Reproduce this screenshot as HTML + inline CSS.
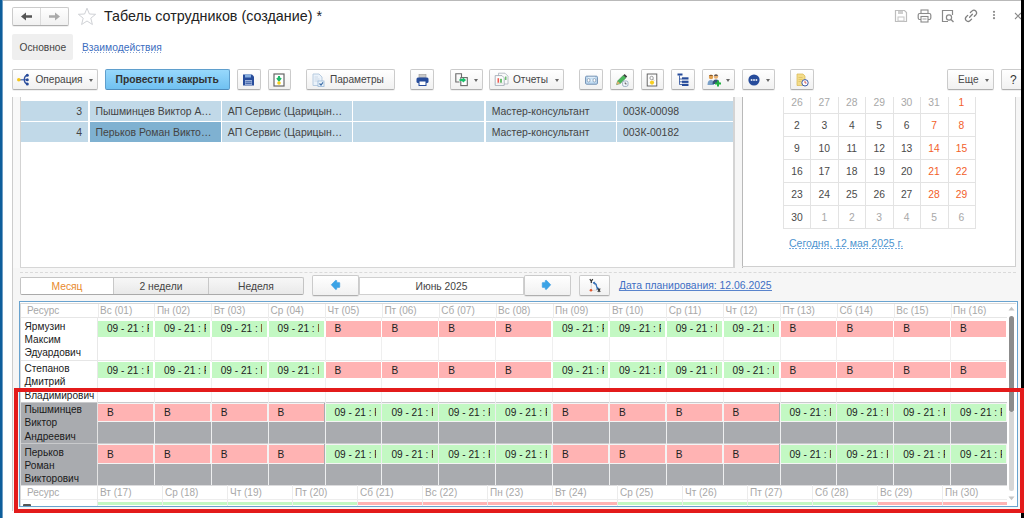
<!DOCTYPE html><html><head><meta charset="utf-8"><style>
*{margin:0;padding:0;box-sizing:border-box}
html,body{width:1024px;height:518px;overflow:hidden;background:#fff}
body{position:relative;font-family:"Liberation Sans",sans-serif;color:#333;font-size:10px}
.a{position:absolute}
.t{position:absolute;white-space:nowrap;line-height:1}
.btn{position:absolute;border:1px solid #cbcbcb;border-bottom-color:#afafaf;border-radius:2px;background:linear-gradient(#ffffff,#f1f1f1);box-shadow:0 1px 0 rgba(0,0,0,.06)}
.dd{position:absolute;width:0;height:0;border-left:2.5px solid transparent;border-right:2.5px solid transparent;border-top:3px solid #666}
</style></head><body>
<div class="a" style="left:0;top:0;width:1024px;height:1px;background:#b9b9b9"></div>
<div class="a" style="left:0;top:0;width:2px;height:518px;background:#0d5e9b"></div>
<div class="a" style="left:2px;top:0;width:1px;height:518px;background:#6f9ec4"></div>
<div class="btn" style="left:12px;top:7px;width:57px;height:19px"></div>
<div class="a" style="left:40px;top:8px;width:1px;height:17px;background:#dcdcdc"></div>
<svg class="a" style="left:20px;top:11px" width="13" height="11" viewBox="0 0 13 11"><path d="M1 5.5 L6 1.5 L6 4.3 L12 4.3 L12 6.7 L6 6.7 L6 9.5 Z" fill="#555"/></svg>
<svg class="a" style="left:48px;top:11px" width="13" height="11" viewBox="0 0 13 11"><path d="M12 5.5 L7 1.5 L7 4.3 L1 4.3 L1 6.7 L7 6.7 L7 9.5 Z" fill="#aaa"/></svg>
<svg class="a" style="left:77px;top:7px" width="20" height="19" viewBox="0 0 20 19"><path d="M10 1.2 L12.4 7 L18.6 7.3 L13.8 11.2 L15.4 17.5 L10 14 L4.6 17.5 L6.2 11.2 L1.4 7.3 L7.6 7 Z" fill="none" stroke="#c9ccd0" stroke-width="0.9"/></svg>
<div class="t" style="left:104px;top:9px;font-size:14.3px;color:#222">Табель сотрудников (создание) *</div>
<div class="a" style="left:12px;top:34px;width:61px;height:26px;background:#efefef;border-radius:2px"></div>
<div class="t" style="left:19.5px;top:43px;font-size:10.2px;color:#444">Основное</div>
<div class="t" style="left:82px;top:43px;font-size:10.3px;color:#3b6dc0">Взаимодействия</div>
<div class="a" style="left:82px;top:52px;width:80px;height:1px;background:repeating-linear-gradient(90deg,#8aa6d6 0 1.5px,transparent 1.5px 3px)"></div>
<svg class="a" style="left:894px;top:9px" width="14" height="14" viewBox="0 0 14 14"><path d="M1.5 1.5 H10.5 L12.5 3.5 V12.5 H1.5 Z" fill="none" stroke="#bdbdbd" stroke-width="1.2"/><rect x="4" y="2" width="5" height="3" fill="#cfcfcf"/><rect x="4" y="8" width="6" height="4" fill="none" stroke="#c4c4c4" stroke-width="1"/></svg>
<svg class="a" style="left:917px;top:9px" width="15" height="14" viewBox="0 0 15 14"><rect x="4" y="1" width="7" height="3.5" fill="none" stroke="#8a8a8a" stroke-width="1.1"/><rect x="1.2" y="4.5" width="12.6" height="6" rx="1.5" fill="none" stroke="#8a8a8a" stroke-width="1.2"/><rect x="4" y="7.5" width="7" height="5.5" fill="#fff" stroke="#8a8a8a" stroke-width="1.1"/><path d="M5.5 10 H9.5" stroke="#8a8a8a" stroke-width="0.8"/></svg>
<svg class="a" style="left:941px;top:9px" width="14" height="14" viewBox="0 0 14 14"><path d="M7 12.5 H1.5 V1.5 H11.5 V6" fill="none" stroke="#8a8a8a" stroke-width="1.2"/><circle cx="8" cy="8.5" r="2.6" fill="none" stroke="#8a8a8a" stroke-width="1.2"/><path d="M10 10.5 L12.5 13" stroke="#8a8a8a" stroke-width="1.4"/></svg>
<svg class="a" style="left:964px;top:9px" width="15" height="14" viewBox="0 0 15 14"><path d="M6.4 3.5 L8.1 1.9 A2.7 2.7 0 0 1 11.9 5.7 L10.3 7.3" fill="none" stroke="#808080" stroke-width="1.3" stroke-linecap="round"/><path d="M3.7 6.4 L2.1 8 A2.7 2.7 0 0 0 5.9 11.8 L7.6 10.1" fill="none" stroke="#808080" stroke-width="1.3" stroke-linecap="round"/><path d="M5.6 8.2 L8.4 5.3" stroke="#808080" stroke-width="1.3" stroke-linecap="round"/></svg>
<svg class="a" style="left:992px;top:10px" width="4" height="10" viewBox="0 0 4 10"><circle cx="2" cy="1.8" r="1.1" fill="#8a8a8a"/><circle cx="2" cy="5" r="1.1" fill="#8a8a8a"/><circle cx="2" cy="8.2" r="1.1" fill="#8a8a8a"/></svg>
<svg class="a" style="left:1014px;top:12px" width="8" height="8" viewBox="0 0 8 8"><path d="M1 1 L7 7 M7 1 L1 7" stroke="#8a8a8a" stroke-width="1.1"/></svg>
<div class="btn" style="left:12px;top:69px;width:86px;height:21px;"></div>
<svg class="a" style="left:16px;top:73px" width="14" height="14" viewBox="0 0 14 14"><path d="M3 6.8 H11.3" stroke="#3c5fae" stroke-width="1.2"/><path d="M11.3 2.2 C7.3 3.4 7.3 10 11.3 11" stroke="#2f4f9e" stroke-width="1.3" fill="none"/><circle cx="2.8" cy="6.7" r="1.8" fill="#f5c518"/><circle cx="11.3" cy="2.3" r="1.5" fill="#254a9a"/><circle cx="11.3" cy="6.8" r="1.5" fill="#254a9a"/><circle cx="11.3" cy="10.9" r="1.5" fill="#254a9a"/></svg>
<div class="t" style="left:35.5px;top:75px;font-size:10.1px;color:#444">Операция</div>
<div class="dd" style="left:88.5px;top:79px"></div>
<div class="a" style="left:105px;top:69px;width:125px;height:21px;border:1px solid #5f9fcd;border-bottom-color:#4f8dbd;border-radius:2px;background:linear-gradient(#97d8fc,#70c1f1)"></div>
<div class="t" style="left:115.5px;top:75px;font-size:10.3px;font-weight:bold;color:#333">Провести и закрыть</div>
<div class="btn" style="left:237px;top:69px;width:24px;height:21px;"></div>
<svg class="a" style="left:242px;top:74px" width="13" height="12" viewBox="0 0 13 12"><path d="M1 0.5 H10 L12 2.5 V11.5 H1 Z" fill="#274c9b"/><rect x="3" y="0.5" width="6" height="3" fill="#86aee0"/><rect x="3" y="6" width="7" height="5" fill="#9fb4dc"/><path d="M3.5 7.8 H9.5 M3.5 9.6 H9.5" stroke="#274c9b" stroke-width="0.8"/></svg>
<div class="btn" style="left:268px;top:69px;width:23px;height:21px;"></div>
<svg class="a" style="left:273px;top:73px" width="12" height="14" viewBox="0 0 12 14"><rect x="1" y="1" width="10" height="12" fill="#fff" stroke="#666" stroke-width="1.2"/><path d="M6 3 V6.5 M4 5 L6 7.5 L8 5" stroke="#1db96a" stroke-width="2" fill="none"/><circle cx="6" cy="10" r="1.8" fill="#f6cf1c"/></svg>
<div class="btn" style="left:306px;top:69px;width:89px;height:21px;"></div>
<svg class="a" style="left:312px;top:73px" width="13" height="14" viewBox="0 0 13 14"><path d="M1 1 H7 L10 4 V12.5 H1 Z" fill="#eaf2fa" stroke="#b8cce0" stroke-width="1"/><path d="M2.5 4 H6 M2.5 6 H7.5 M2.5 8 H7.5" stroke="#c5d3e2" stroke-width="0.8"/><rect x="6" y="8" width="6" height="5.5" fill="#eef5fb" stroke="#9ab8d8" stroke-width="0.8"/><path d="M7.5 10.5 L9 12 L11 9.3" stroke="#3e6ea8" stroke-width="1.2" fill="none"/></svg>
<div class="t" style="left:330px;top:75px;font-size:10.1px;color:#444">Параметры</div>
<div class="btn" style="left:410px;top:69px;width:24px;height:21px;"></div>
<svg class="a" style="left:416px;top:74px" width="13" height="12" viewBox="0 0 13 12"><rect x="3" y="0.5" width="7" height="3" fill="#c8c8c8" stroke="#999" stroke-width="0.6"/><rect x="0.5" y="3.5" width="12" height="5.5" rx="1.5" fill="#274c9b"/><rect x="3" y="7" width="7" height="4.5" fill="#fff" stroke="#274c9b" stroke-width="1"/></svg>
<div class="btn" style="left:450px;top:69px;width:33px;height:21px;"></div>
<svg class="a" style="left:454px;top:72px" width="15" height="15" viewBox="0 0 15 15"><path d="M5.5 10 H1.8 V1.8 H7.5 V5.5" fill="none" stroke="#6a6a6a" stroke-width="1.1"/><rect x="6.8" y="5.6" width="6.5" height="8" fill="#fff" stroke="#6a6a6a" stroke-width="1.1"/><path d="M5.5 8.1 H10 M8.6 6.4 L10.6 8.1 L8.6 9.8" stroke="#19c06a" stroke-width="2" fill="none"/></svg>
<div class="dd" style="left:474px;top:79px"></div>
<div class="btn" style="left:489px;top:69px;width:75px;height:21px;"></div>
<svg class="a" style="left:494px;top:72px" width="15" height="15" viewBox="0 0 15 15"><path d="M4.5 1.2 H11 L14 4.2 V12 H4.5 Z" fill="#fafafa" stroke="#a9b1ba" stroke-width="0.8"/><rect x="11.2" y="4.5" width="1.2" height="3.5" fill="#4cb050"/><path d="M1.2 3.6 H8 L10.2 5.8 V13.4 H1.2 Z" fill="#fdfdfd" stroke="#98a2ad" stroke-width="0.8"/><rect x="3.5" y="6.2" width="1.6" height="4.6" fill="#ef5a50"/><rect x="6.2" y="6.8" width="1.6" height="4" fill="#4cb050"/><path d="M2.5 11.2 H9" stroke="#c8c8c8" stroke-width="0.6"/></svg>
<div class="t" style="left:513px;top:75px;font-size:10.1px;color:#444">Отчеты</div>
<div class="dd" style="left:555px;top:79px"></div>
<div class="btn" style="left:579px;top:69px;width:24px;height:21px;"></div>
<svg class="a" style="left:585px;top:75px" width="13" height="10" viewBox="0 0 13 10"><rect x="0.6" y="1.2" width="11.8" height="8" rx="1" fill="#c2ddf3" stroke="#6f8db0" stroke-width="1"/><path d="M3 2.3 H10" stroke="#fff" stroke-width="0.6"/><rect x="2.3" y="3.6" width="2.6" height="3.4" rx="1.2" fill="#fff" stroke="#7a8fa8" stroke-width="0.7"/><rect x="8.1" y="3.6" width="2.6" height="3.4" rx="1.2" fill="#fff" stroke="#7a8fa8" stroke-width="0.7"/><rect x="5.8" y="4.2" width="1.4" height="2.2" fill="#e8f2fb"/></svg>
<div class="btn" style="left:610px;top:69px;width:24px;height:21px;"></div>
<svg class="a" style="left:615px;top:73px" width="14" height="14" viewBox="0 0 14 14"><path d="M1.6 11.6 L2.6 8 L8.4 2.2 L11 4.8 L5.2 10.6 Z" fill="#48b85a" stroke="#2d7a3a" stroke-width="0.5"/><path d="M8.4 2.2 L9.6 1 L12.2 3.6 L11 4.8 Z" fill="#3d3d3d"/><path d="M1.6 11.6 L2.6 8 L5.2 10.6 Z" fill="#e0b070"/><rect x="7.6" y="8" width="5.4" height="5.4" rx="1.6" fill="#f4f8fc" stroke="#8aa0b8" stroke-width="0.8"/><path d="M10.2 9.4 V10.9 H11.6" stroke="#333" stroke-width="0.8" fill="none"/></svg>
<div class="btn" style="left:641px;top:69px;width:23px;height:21px;"></div>
<svg class="a" style="left:646px;top:73px" width="12" height="14" viewBox="0 0 12 14"><rect x="1.2" y="1" width="9.6" height="12" fill="#fcfcfc" stroke="#5a5a5a" stroke-width="0.9"/><circle cx="5.6" cy="5" r="1.7" fill="none" stroke="#888" stroke-width="0.8"/><path d="M6.8 6.2 L8 7.4" stroke="#888" stroke-width="0.8"/><circle cx="6" cy="9.6" r="2.1" fill="#f8cf20"/></svg>
<div class="btn" style="left:671px;top:69px;width:24px;height:21px;"></div>
<svg class="a" style="left:677px;top:73px" width="12" height="14" viewBox="0 0 12 14"><rect x="0.5" y="0.5" width="5" height="2" fill="#274c9b"/><path d="M2.5 2.5 V11.5 M2.5 6 H5 M2.5 8.8 H5 M2.5 11.5 H5" stroke="#274c9b" stroke-width="0.8"/><rect x="5" y="4.3" width="6.5" height="2.2" fill="#274c9b"/><rect x="5" y="7.7" width="6.5" height="2.2" fill="#274c9b"/><rect x="5" y="10.8" width="6.5" height="2.2" fill="#274c9b"/></svg>
<div class="btn" style="left:702px;top:69px;width:33px;height:21px;"></div>
<svg class="a" style="left:707px;top:73px" width="15" height="14" viewBox="0 0 15 14"><circle cx="4" cy="4" r="2.2" fill="#e0a050"/><path d="M1.8 3 Q4 0.5 6.2 3" fill="#8a5a2a"/><path d="M0.5 12 Q0.5 7 4 7 Q7 7 7 12 Z" fill="#7aa0c8"/><circle cx="9" cy="3.5" r="2.2" fill="#e8b070"/><path d="M6.8 2.8 Q9 0 11.2 2.8" fill="#34405a"/><path d="M5.5 11 Q5.5 6.5 9 6.5 Q12.5 6.5 12.5 11 Z" fill="#34507a"/><path d="M11 7.5 V13.5 M8 10.5 H14" stroke="#20b040" stroke-width="2"/></svg>
<div class="dd" style="left:726px;top:79px"></div>
<div class="btn" style="left:742px;top:69px;width:33px;height:21px;"></div>
<svg class="a" style="left:748px;top:74px" width="12" height="12" viewBox="0 0 12 12"><circle cx="6" cy="6" r="5.6" fill="#274c9b"/><rect x="2.8" y="5.2" width="1.6" height="1.6" fill="#fff"/><rect x="5.2" y="5.2" width="1.6" height="1.6" fill="#fff"/><rect x="7.6" y="5.2" width="1.6" height="1.6" fill="#fff"/></svg>
<div class="dd" style="left:766px;top:79px"></div>
<div class="btn" style="left:790px;top:69px;width:24px;height:21px;"></div>
<svg class="a" style="left:796px;top:73px" width="13" height="14" viewBox="0 0 13 14"><path d="M1 1 H7 L9 3 V12.5 H1 Z" fill="#f3dc8a" stroke="#d8b850" stroke-width="0.7"/><path d="M2.5 4.5 H6.5 M2.5 6.5 H6.5 M2.5 8.5 H5" stroke="#d8b850" stroke-width="0.6"/><circle cx="9" cy="9.8" r="3.2" fill="#fff" stroke="#3a5aa8" stroke-width="1"/><path d="M9 8 V10 H10.5" stroke="#c33" stroke-width="0.8" fill="none"/></svg>
<div class="btn" style="left:947px;top:69px;width:47px;height:21px;"></div>
<div class="t" style="left:958px;top:75px;font-size:10.1px;color:#4a4a4a">Еще</div>
<div class="dd" style="left:984.5px;top:79px"></div>
<div class="btn" style="left:1001px;top:69px;width:24px;height:21px;"></div>
<div class="t" style="left:1010px;top:74px;font-size:12px;color:#333">?</div>
<div class="a" style="left:13px;top:97px;width:1008px;height:413px;background:#f6f6f6"></div>
<div class="a" style="left:21px;top:97px;width:712px;height:170px;background:#fff"></div>
<div class="a" style="left:743px;top:97px;width:272px;height:169px;background:#fff"></div>
<div class="a" style="left:12px;top:97px;width:1px;height:414px;background:#cdcdcd"></div>
<div class="a" style="left:13px;top:97px;width:8px;height:171px;background:#f9f9f9"></div>
<div class="a" style="left:20px;top:97px;width:1px;height:171px;background:#d3d3d3"></div>
<div class="a" style="left:20px;top:267px;width:715px;height:1px;background:#d6d6d6"></div>
<div class="a" style="left:733px;top:97px;width:2px;height:171px;background:#d4d4d4"></div>
<div class="a" style="left:735px;top:97px;width:7px;height:171px;background:#f6f6f6"></div>
<div class="a" style="left:742px;top:97px;width:1px;height:171px;background:#b9b9b9"></div>
<div class="a" style="left:21px;top:101px;width:67px;height:19.5px;background:#c1d9e8"></div>
<div class="t" style="left:21px;width:61px;text-align:right;top:106.6px;font-size:10.45px;color:#444">3</div>
<div class="a" style="left:89.5px;top:101px;width:131.0px;height:19.5px;background:#c1d9e8"></div>
<div class="t" style="left:95.5px;top:106.6px;font-size:10.45px;color:#444">Пышминцев Виктор А…</div>
<div class="a" style="left:221.8px;top:101px;width:130.2px;height:19.5px;background:#c1d9e8"></div>
<div class="t" style="left:227.8px;top:106.6px;font-size:10.45px;color:#444">АП Сервис (Царицын…</div>
<div class="a" style="left:353.2px;top:101px;width:131.3px;height:19.5px;background:#c1d9e8"></div>
<div class="a" style="left:485.7px;top:101px;width:130.09999999999997px;height:19.5px;background:#c1d9e8"></div>
<div class="t" style="left:491.7px;top:106.6px;font-size:10.45px;color:#444">Мастер-консультант</div>
<div class="a" style="left:617px;top:101px;width:116px;height:19.5px;background:#c1d9e8"></div>
<div class="t" style="left:623px;top:106.6px;font-size:10.45px;color:#444">003К-00098</div>
<div class="a" style="left:21px;top:122px;width:67px;height:19.5px;background:#c1d9e8"></div>
<div class="t" style="left:21px;width:61px;text-align:right;top:127.6px;font-size:10.45px;color:#444">4</div>
<div class="a" style="left:89.5px;top:122px;width:131.0px;height:19.5px;background:#7fb1d1"></div>
<div class="t" style="left:95.5px;top:127.6px;font-size:10.45px;color:#444">Перьков Роман Викто…</div>
<div class="a" style="left:221.8px;top:122px;width:130.2px;height:19.5px;background:#c1d9e8"></div>
<div class="t" style="left:227.8px;top:127.6px;font-size:10.45px;color:#444">АП Сервис (Царицын…</div>
<div class="a" style="left:353.2px;top:122px;width:131.3px;height:19.5px;background:#c1d9e8"></div>
<div class="a" style="left:485.7px;top:122px;width:130.09999999999997px;height:19.5px;background:#c1d9e8"></div>
<div class="t" style="left:491.7px;top:127.6px;font-size:10.45px;color:#444">Мастер-консультант</div>
<div class="a" style="left:617px;top:122px;width:116px;height:19.5px;background:#c1d9e8"></div>
<div class="t" style="left:623px;top:127.6px;font-size:10.45px;color:#444">003К-00182</div>
<div class="a" style="left:742px;top:266px;width:274px;height:1px;background:#cfcfcf"></div>
<div class="a" style="left:1015px;top:97px;width:1px;height:170px;background:#cfcfcf"></div>
<div class="a" style="left:743px;top:97px;width:272px;height:140px;overflow:hidden">
<div class="a" style="left:40px;top:0;width:1px;height:132px;background:#e3e3e3"></div>
<div class="a" style="left:67px;top:0;width:1px;height:132px;background:#e3e3e3"></div>
<div class="a" style="left:95px;top:0;width:1px;height:132px;background:#e3e3e3"></div>
<div class="a" style="left:122px;top:0;width:1px;height:132px;background:#e3e3e3"></div>
<div class="a" style="left:150px;top:0;width:1px;height:132px;background:#e3e3e3"></div>
<div class="a" style="left:177px;top:0;width:1px;height:132px;background:#e3e3e3"></div>
<div class="a" style="left:205px;top:0;width:1px;height:132px;background:#e3e3e3"></div>
<div class="a" style="left:232px;top:0;width:1px;height:132px;background:#e3e3e3"></div>
<div class="a" style="left:40px;top:16px;width:193px;height:1px;background:#e3e3e3"></div>
<div class="a" style="left:40px;top:39px;width:193px;height:1px;background:#e3e3e3"></div>
<div class="a" style="left:40px;top:62px;width:193px;height:1px;background:#e3e3e3"></div>
<div class="a" style="left:40px;top:85px;width:193px;height:1px;background:#e3e3e3"></div>
<div class="a" style="left:40px;top:108px;width:193px;height:1px;background:#e3e3e3"></div>
<div class="a" style="left:40px;top:131px;width:193px;height:1px;background:#e3e3e3"></div>
<div class="t" style="left:40.20px;top:0.90px;width:27.43px;text-align:center;font-size:10.3px;color:#a8a8a8">26</div>
<div class="t" style="left:67.63px;top:0.90px;width:27.43px;text-align:center;font-size:10.3px;color:#a8a8a8">27</div>
<div class="t" style="left:95.06px;top:0.90px;width:27.43px;text-align:center;font-size:10.3px;color:#a8a8a8">28</div>
<div class="t" style="left:122.49px;top:0.90px;width:27.43px;text-align:center;font-size:10.3px;color:#a8a8a8">29</div>
<div class="t" style="left:149.92px;top:0.90px;width:27.43px;text-align:center;font-size:10.3px;color:#a8a8a8">30</div>
<div class="t" style="left:177.35px;top:0.90px;width:27.43px;text-align:center;font-size:10.3px;color:#a8a8a8">31</div>
<div class="t" style="left:204.78px;top:0.90px;width:27.43px;text-align:center;font-size:10.3px;color:#f2602a">1</div>
<div class="t" style="left:40.20px;top:23.98px;width:27.43px;text-align:center;font-size:10.3px;color:#4a4a4a">2</div>
<div class="t" style="left:67.63px;top:23.98px;width:27.43px;text-align:center;font-size:10.3px;color:#4a4a4a">3</div>
<div class="t" style="left:95.06px;top:23.98px;width:27.43px;text-align:center;font-size:10.3px;color:#4a4a4a">4</div>
<div class="t" style="left:122.49px;top:23.98px;width:27.43px;text-align:center;font-size:10.3px;color:#4a4a4a">5</div>
<div class="t" style="left:149.92px;top:23.98px;width:27.43px;text-align:center;font-size:10.3px;color:#4a4a4a">6</div>
<div class="t" style="left:177.35px;top:23.98px;width:27.43px;text-align:center;font-size:10.3px;color:#f2602a">7</div>
<div class="t" style="left:204.78px;top:23.98px;width:27.43px;text-align:center;font-size:10.3px;color:#f2602a">8</div>
<div class="t" style="left:40.20px;top:47.06px;width:27.43px;text-align:center;font-size:10.3px;color:#4a4a4a">9</div>
<div class="t" style="left:67.63px;top:47.06px;width:27.43px;text-align:center;font-size:10.3px;color:#4a4a4a">10</div>
<div class="t" style="left:95.06px;top:47.06px;width:27.43px;text-align:center;font-size:10.3px;color:#4a4a4a">11</div>
<div class="t" style="left:122.49px;top:47.06px;width:27.43px;text-align:center;font-size:10.3px;color:#4a4a4a">12</div>
<div class="t" style="left:149.92px;top:47.06px;width:27.43px;text-align:center;font-size:10.3px;color:#4a4a4a">13</div>
<div class="t" style="left:177.35px;top:47.06px;width:27.43px;text-align:center;font-size:10.3px;color:#f2602a">14</div>
<div class="t" style="left:204.78px;top:47.06px;width:27.43px;text-align:center;font-size:10.3px;color:#f2602a">15</div>
<div class="t" style="left:40.20px;top:70.14px;width:27.43px;text-align:center;font-size:10.3px;color:#4a4a4a">16</div>
<div class="t" style="left:67.63px;top:70.14px;width:27.43px;text-align:center;font-size:10.3px;color:#4a4a4a">17</div>
<div class="t" style="left:95.06px;top:70.14px;width:27.43px;text-align:center;font-size:10.3px;color:#4a4a4a">18</div>
<div class="t" style="left:122.49px;top:70.14px;width:27.43px;text-align:center;font-size:10.3px;color:#4a4a4a">19</div>
<div class="t" style="left:149.92px;top:70.14px;width:27.43px;text-align:center;font-size:10.3px;color:#4a4a4a">20</div>
<div class="t" style="left:177.35px;top:70.14px;width:27.43px;text-align:center;font-size:10.3px;color:#f2602a">21</div>
<div class="t" style="left:204.78px;top:70.14px;width:27.43px;text-align:center;font-size:10.3px;color:#f2602a">22</div>
<div class="t" style="left:40.20px;top:93.22px;width:27.43px;text-align:center;font-size:10.3px;color:#4a4a4a">23</div>
<div class="t" style="left:67.63px;top:93.22px;width:27.43px;text-align:center;font-size:10.3px;color:#4a4a4a">24</div>
<div class="t" style="left:95.06px;top:93.22px;width:27.43px;text-align:center;font-size:10.3px;color:#4a4a4a">25</div>
<div class="t" style="left:122.49px;top:93.22px;width:27.43px;text-align:center;font-size:10.3px;color:#4a4a4a">26</div>
<div class="t" style="left:149.92px;top:93.22px;width:27.43px;text-align:center;font-size:10.3px;color:#4a4a4a">27</div>
<div class="t" style="left:177.35px;top:93.22px;width:27.43px;text-align:center;font-size:10.3px;color:#f2602a">28</div>
<div class="t" style="left:204.78px;top:93.22px;width:27.43px;text-align:center;font-size:10.3px;color:#f2602a">29</div>
<div class="t" style="left:40.20px;top:116.30px;width:27.43px;text-align:center;font-size:10.3px;color:#4a4a4a">30</div>
<div class="t" style="left:67.63px;top:116.30px;width:27.43px;text-align:center;font-size:10.3px;color:#a8a8a8">1</div>
<div class="t" style="left:95.06px;top:116.30px;width:27.43px;text-align:center;font-size:10.3px;color:#a8a8a8">2</div>
<div class="t" style="left:122.49px;top:116.30px;width:27.43px;text-align:center;font-size:10.3px;color:#a8a8a8">3</div>
<div class="t" style="left:149.92px;top:116.30px;width:27.43px;text-align:center;font-size:10.3px;color:#a8a8a8">4</div>
<div class="t" style="left:177.35px;top:116.30px;width:27.43px;text-align:center;font-size:10.3px;color:#a8a8a8">5</div>
<div class="t" style="left:204.78px;top:116.30px;width:27.43px;text-align:center;font-size:10.3px;color:#a8a8a8">6</div>
</div>
<div class="t" style="left:789px;top:238.3px;font-size:10.5px;color:#4d94cf">Сегодня, 12 мая 2025 г.</div>
<div class="a" style="left:789px;top:247.5px;width:114px;height:1px;background:repeating-linear-gradient(90deg,#78ade0 0 2px,transparent 2px 3.2px)"></div>
<div class="a" style="left:20px;top:272px;width:996px;height:1px;border-top:1px dashed #dadada"></div>
<div class="a" style="left:20px;top:277px;width:284px;height:18px;border:1px solid #c4c4c4;border-bottom-color:#aaa;border-radius:2px;background:linear-gradient(#f7f7f7,#e9e9e9);overflow:hidden"><div class="a" style="left:0;top:0;width:93px;height:16px;background:#fff;border-right:1px solid #c8c8c8"></div><div class="a" style="left:186.5px;top:0;width:1px;height:16px;background:#c8c8c8"></div></div>
<div class="t" style="left:20px;width:94px;text-align:center;top:281.5px;font-size:10.3px;color:#e8892c">Месяц</div>
<div class="t" style="left:114px;width:94px;text-align:center;top:281.5px;font-size:10.3px;color:#444">2 недели</div>
<div class="t" style="left:208px;width:96px;text-align:center;top:281.5px;font-size:10.3px;color:#444">Неделя</div>
<div class="btn" style="left:312px;top:275px;width:47px;height:21px;"></div>
<svg class="a" style="left:330px;top:279px" width="11" height="12" viewBox="0 0 11 12"><path d="M1.2 5.8 L5.6 1.3 L6.8 1.6 L6.8 3.4 L9.2 3.4 Q9.8 3.4 9.8 4 L9.8 7.9 Q9.8 8.5 9.2 8.5 L6.8 8.5 L6.8 10.2 L5.6 10.6 Z" fill="#3ba3e6" stroke="#3a9ae0" stroke-width="0.5" stroke-linejoin="round"/></svg>
<div class="a" style="left:359px;top:277px;width:165px;height:18px;border:1px solid #d0d0d0;background:#fff"></div>
<div class="t" style="left:359px;width:165px;text-align:center;top:281.5px;font-size:10.3px;color:#444">Июнь 2025</div>
<div class="btn" style="left:524px;top:275px;width:47px;height:21px;"></div>
<svg class="a" style="left:541px;top:279px" width="11" height="12" viewBox="0 0 11 12"><path d="M9.8 5.8 L5.4 1.3 L4.2 1.6 L4.2 3.4 L1.8 3.4 Q1.2 3.4 1.2 4 L1.2 7.9 Q1.2 8.5 1.8 8.5 L4.2 8.5 L4.2 10.2 L5.4 10.6 Z" fill="#3ba3e6" stroke="#3a9ae0" stroke-width="0.5" stroke-linejoin="round"/></svg>
<div class="btn" style="left:579px;top:275px;width:31px;height:21px;"></div>
<svg class="a" style="left:588px;top:278px" width="14" height="15" viewBox="0 0 14 15"><path d="M3.3 4.5 V11" stroke="#aaa" stroke-width="0.8" stroke-dasharray="1 1"/><path d="M4.5 12.3 H9" stroke="#bbb" stroke-width="0.8" stroke-dasharray="1 1"/><path d="M1.8 1.2 L3.3 3.2 L4.8 1.2 M3.3 3.2 V5" stroke="#333" stroke-width="1.2" fill="none"/><circle cx="3" cy="12.3" r="1.3" fill="#e2542a"/><path d="M5.5 5 Q8.5 5.5 8.5 8 Q8.5 10 10.5 10.5" stroke="#3b74b8" stroke-width="1.3" fill="none"/><path d="M4.6 4.6 L7.2 3.4 L6.6 6.8 Z" fill="#3b74b8"/><path d="M11.2 11 L8.3 12 L9 8.8 Z" fill="#3b74b8"/><path d="M9.8 10.5 L12.2 13.8 M12.2 10.5 L9.8 13.8" stroke="#333" stroke-width="1.2"/></svg>
<div class="t" style="left:619px;top:280.8px;font-size:10.4px;color:#3d6ec4">Дата планирования: 12.06.2025</div>
<div class="a" style="left:619px;top:290px;width:152.5px;height:1px;background:#5a84cc"></div>
<div class="a" style="left:19px;top:301px;width:999px;height:206px;border:1px solid #69a3cf;background:#fff"></div>
<div class="a" style="left:20px;top:303px;width:996px;height:1px;background:#d9d9d9"></div>
<div class="a" style="left:20px;top:303px;width:1px;height:203px;background:#d9d9d9"></div>
<div class="t" style="left:27px;top:306px;font-size:10px;color:#a8a8a8">Ресурс</div>
<div class="a" style="left:97.5px;top:304px;width:1px;height:13px;background:#ececec"></div>
<div class="t" style="left:100.00px;top:306px;font-size:10px;color:#a8a8a8">Вс (01)</div>
<div class="a" style="left:154.375px;top:304px;width:1px;height:13px;background:#ececec"></div>
<div class="t" style="left:156.88px;top:306px;font-size:10px;color:#a8a8a8">Пн (02)</div>
<div class="a" style="left:211.25px;top:304px;width:1px;height:13px;background:#ececec"></div>
<div class="t" style="left:213.75px;top:306px;font-size:10px;color:#a8a8a8">Вт (03)</div>
<div class="a" style="left:268.125px;top:304px;width:1px;height:13px;background:#ececec"></div>
<div class="t" style="left:270.62px;top:306px;font-size:10px;color:#a8a8a8">Ср (04)</div>
<div class="a" style="left:325.0px;top:304px;width:1px;height:13px;background:#ececec"></div>
<div class="t" style="left:327.50px;top:306px;font-size:10px;color:#a8a8a8">Чт (05)</div>
<div class="a" style="left:381.875px;top:304px;width:1px;height:13px;background:#ececec"></div>
<div class="t" style="left:384.38px;top:306px;font-size:10px;color:#a8a8a8">Пт (06)</div>
<div class="a" style="left:438.75px;top:304px;width:1px;height:13px;background:#ececec"></div>
<div class="t" style="left:441.25px;top:306px;font-size:10px;color:#a8a8a8">Сб (07)</div>
<div class="a" style="left:495.625px;top:304px;width:1px;height:13px;background:#ececec"></div>
<div class="t" style="left:498.12px;top:306px;font-size:10px;color:#a8a8a8">Вс (08)</div>
<div class="a" style="left:552.5px;top:304px;width:1px;height:13px;background:#ececec"></div>
<div class="t" style="left:555.00px;top:306px;font-size:10px;color:#a8a8a8">Пн (09)</div>
<div class="a" style="left:609.375px;top:304px;width:1px;height:13px;background:#ececec"></div>
<div class="t" style="left:611.88px;top:306px;font-size:10px;color:#a8a8a8">Вт (10)</div>
<div class="a" style="left:666.25px;top:304px;width:1px;height:13px;background:#ececec"></div>
<div class="t" style="left:668.75px;top:306px;font-size:10px;color:#a8a8a8">Ср (11)</div>
<div class="a" style="left:723.125px;top:304px;width:1px;height:13px;background:#ececec"></div>
<div class="t" style="left:725.62px;top:306px;font-size:10px;color:#a8a8a8">Чт (12)</div>
<div class="a" style="left:780.0px;top:304px;width:1px;height:13px;background:#ececec"></div>
<div class="t" style="left:782.50px;top:306px;font-size:10px;color:#a8a8a8">Пт (13)</div>
<div class="a" style="left:836.875px;top:304px;width:1px;height:13px;background:#ececec"></div>
<div class="t" style="left:839.38px;top:306px;font-size:10px;color:#a8a8a8">Сб (14)</div>
<div class="a" style="left:893.75px;top:304px;width:1px;height:13px;background:#ececec"></div>
<div class="t" style="left:896.25px;top:306px;font-size:10px;color:#a8a8a8">Вс (15)</div>
<div class="a" style="left:950.625px;top:304px;width:1px;height:13px;background:#ececec"></div>
<div class="t" style="left:953.12px;top:306px;font-size:10px;color:#a8a8a8">Пн (16)</div>
<div class="a" style="left:21px;top:317px;width:986px;height:1px;background:#e6e6e6"></div>
<div class="a" style="left:21px;top:317px;width:986px;height:1px;background:#e6e6e6"></div>
<div class="a" style="left:97px;top:317px;width:1px;height:43px;background:#e8e8e8"></div>
<div class="a" style="left:98.00px;top:321px;width:55.38px;height:16px;background:#c3f8c3"><div class="a" style="left:0;top:0;width:50.67px;height:16px;overflow:hidden"><div class="t" style="left:9px;top:3.3px;font-size:10.1px;color:#222">09 - 21 : Р</div></div></div>
<div class="a" style="left:153.875px;top:317px;width:1px;height:4px;background:#efefef"></div>
<div class="a" style="left:153.875px;top:337px;width:1px;height:23px;background:#efefef"></div>
<div class="a" style="left:154.88px;top:321px;width:55.38px;height:16px;background:#c3f8c3"><div class="a" style="left:0;top:0;width:50.67px;height:16px;overflow:hidden"><div class="t" style="left:9px;top:3.3px;font-size:10.1px;color:#222">09 - 21 : Р</div></div></div>
<div class="a" style="left:210.75px;top:317px;width:1px;height:4px;background:#efefef"></div>
<div class="a" style="left:210.75px;top:337px;width:1px;height:23px;background:#efefef"></div>
<div class="a" style="left:211.75px;top:321px;width:55.38px;height:16px;background:#c3f8c3"><div class="a" style="left:0;top:0;width:50.67px;height:16px;overflow:hidden"><div class="t" style="left:9px;top:3.3px;font-size:10.1px;color:#222">09 - 21 : Р</div></div></div>
<div class="a" style="left:267.625px;top:317px;width:1px;height:4px;background:#efefef"></div>
<div class="a" style="left:267.625px;top:337px;width:1px;height:23px;background:#efefef"></div>
<div class="a" style="left:268.62px;top:321px;width:55.38px;height:16px;background:#c3f8c3"><div class="a" style="left:0;top:0;width:50.67px;height:16px;overflow:hidden"><div class="t" style="left:9px;top:3.3px;font-size:10.1px;color:#222">09 - 21 : Р</div></div></div>
<div class="a" style="left:324.5px;top:317px;width:1px;height:4px;background:#efefef"></div>
<div class="a" style="left:324.5px;top:337px;width:1px;height:23px;background:#efefef"></div>
<div class="a" style="left:325.50px;top:321px;width:55.38px;height:16px;background:#ffb3b3"><div class="a" style="left:0;top:0;width:50.67px;height:16px;overflow:hidden"><div class="t" style="left:9px;top:3.3px;font-size:10.1px;color:#222">В</div></div></div>
<div class="a" style="left:381.375px;top:317px;width:1px;height:4px;background:#efefef"></div>
<div class="a" style="left:381.375px;top:337px;width:1px;height:23px;background:#efefef"></div>
<div class="a" style="left:382.38px;top:321px;width:55.38px;height:16px;background:#ffb3b3"><div class="a" style="left:0;top:0;width:50.67px;height:16px;overflow:hidden"><div class="t" style="left:9px;top:3.3px;font-size:10.1px;color:#222">В</div></div></div>
<div class="a" style="left:438.25px;top:317px;width:1px;height:4px;background:#efefef"></div>
<div class="a" style="left:438.25px;top:337px;width:1px;height:23px;background:#efefef"></div>
<div class="a" style="left:439.25px;top:321px;width:55.38px;height:16px;background:#ffb3b3"><div class="a" style="left:0;top:0;width:50.67px;height:16px;overflow:hidden"><div class="t" style="left:9px;top:3.3px;font-size:10.1px;color:#222">В</div></div></div>
<div class="a" style="left:495.125px;top:317px;width:1px;height:4px;background:#efefef"></div>
<div class="a" style="left:495.125px;top:337px;width:1px;height:23px;background:#efefef"></div>
<div class="a" style="left:496.12px;top:321px;width:55.38px;height:16px;background:#ffb3b3"><div class="a" style="left:0;top:0;width:50.67px;height:16px;overflow:hidden"><div class="t" style="left:9px;top:3.3px;font-size:10.1px;color:#222">В</div></div></div>
<div class="a" style="left:552.0px;top:317px;width:1px;height:4px;background:#efefef"></div>
<div class="a" style="left:552.0px;top:337px;width:1px;height:23px;background:#efefef"></div>
<div class="a" style="left:553.00px;top:321px;width:55.38px;height:16px;background:#c3f8c3"><div class="a" style="left:0;top:0;width:50.67px;height:16px;overflow:hidden"><div class="t" style="left:9px;top:3.3px;font-size:10.1px;color:#222">09 - 21 : Р</div></div></div>
<div class="a" style="left:608.875px;top:317px;width:1px;height:4px;background:#efefef"></div>
<div class="a" style="left:608.875px;top:337px;width:1px;height:23px;background:#efefef"></div>
<div class="a" style="left:609.88px;top:321px;width:55.38px;height:16px;background:#c3f8c3"><div class="a" style="left:0;top:0;width:50.67px;height:16px;overflow:hidden"><div class="t" style="left:9px;top:3.3px;font-size:10.1px;color:#222">09 - 21 : Р</div></div></div>
<div class="a" style="left:665.75px;top:317px;width:1px;height:4px;background:#efefef"></div>
<div class="a" style="left:665.75px;top:337px;width:1px;height:23px;background:#efefef"></div>
<div class="a" style="left:666.75px;top:321px;width:55.38px;height:16px;background:#c3f8c3"><div class="a" style="left:0;top:0;width:50.67px;height:16px;overflow:hidden"><div class="t" style="left:9px;top:3.3px;font-size:10.1px;color:#222">09 - 21 : Р</div></div></div>
<div class="a" style="left:722.625px;top:317px;width:1px;height:4px;background:#efefef"></div>
<div class="a" style="left:722.625px;top:337px;width:1px;height:23px;background:#efefef"></div>
<div class="a" style="left:723.62px;top:321px;width:55.38px;height:16px;background:#c3f8c3"><div class="a" style="left:0;top:0;width:50.67px;height:16px;overflow:hidden"><div class="t" style="left:9px;top:3.3px;font-size:10.1px;color:#222">09 - 21 : Р</div></div></div>
<div class="a" style="left:779.5px;top:317px;width:1px;height:4px;background:#efefef"></div>
<div class="a" style="left:779.5px;top:337px;width:1px;height:23px;background:#efefef"></div>
<div class="a" style="left:780.50px;top:321px;width:55.38px;height:16px;background:#ffb3b3"><div class="a" style="left:0;top:0;width:50.67px;height:16px;overflow:hidden"><div class="t" style="left:9px;top:3.3px;font-size:10.1px;color:#222">В</div></div></div>
<div class="a" style="left:836.375px;top:317px;width:1px;height:4px;background:#efefef"></div>
<div class="a" style="left:836.375px;top:337px;width:1px;height:23px;background:#efefef"></div>
<div class="a" style="left:837.38px;top:321px;width:55.38px;height:16px;background:#ffb3b3"><div class="a" style="left:0;top:0;width:50.67px;height:16px;overflow:hidden"><div class="t" style="left:9px;top:3.3px;font-size:10.1px;color:#222">В</div></div></div>
<div class="a" style="left:893.25px;top:317px;width:1px;height:4px;background:#efefef"></div>
<div class="a" style="left:893.25px;top:337px;width:1px;height:23px;background:#efefef"></div>
<div class="a" style="left:894.25px;top:321px;width:55.38px;height:16px;background:#ffb3b3"><div class="a" style="left:0;top:0;width:50.67px;height:16px;overflow:hidden"><div class="t" style="left:9px;top:3.3px;font-size:10.1px;color:#222">В</div></div></div>
<div class="a" style="left:950.125px;top:317px;width:1px;height:4px;background:#efefef"></div>
<div class="a" style="left:950.125px;top:337px;width:1px;height:23px;background:#efefef"></div>
<div class="a" style="left:951.12px;top:321px;width:55.38px;height:16px;background:#ffb3b3"><div class="a" style="left:0;top:0;width:50.67px;height:16px;overflow:hidden"><div class="t" style="left:9px;top:3.3px;font-size:10.1px;color:#222">В</div></div></div>
<div class="t" style="left:24.5px;top:321.5px;font-size:10.1px;color:#1a1a1a">Ярмузин</div>
<div class="t" style="left:24.5px;top:334.8px;font-size:10.1px;color:#1a1a1a">Максим</div>
<div class="t" style="left:24.5px;top:348.1px;font-size:10.1px;color:#1a1a1a">Эдуардович</div>
<div class="a" style="left:21px;top:360px;width:986px;height:1px;background:#e6e6e6"></div>
<div class="a" style="left:97px;top:360px;width:1px;height:42px;background:#e8e8e8"></div>
<div class="a" style="left:98.00px;top:362px;width:55.38px;height:16px;background:#c3f8c3"><div class="a" style="left:0;top:0;width:50.67px;height:16px;overflow:hidden"><div class="t" style="left:9px;top:4.0px;font-size:10.1px;color:#222">09 - 21 : Р</div></div></div>
<div class="a" style="left:153.875px;top:360px;width:1px;height:2px;background:#efefef"></div>
<div class="a" style="left:153.875px;top:378px;width:1px;height:24px;background:#efefef"></div>
<div class="a" style="left:154.88px;top:362px;width:55.38px;height:16px;background:#c3f8c3"><div class="a" style="left:0;top:0;width:50.67px;height:16px;overflow:hidden"><div class="t" style="left:9px;top:4.0px;font-size:10.1px;color:#222">09 - 21 : Р</div></div></div>
<div class="a" style="left:210.75px;top:360px;width:1px;height:2px;background:#efefef"></div>
<div class="a" style="left:210.75px;top:378px;width:1px;height:24px;background:#efefef"></div>
<div class="a" style="left:211.75px;top:362px;width:55.38px;height:16px;background:#c3f8c3"><div class="a" style="left:0;top:0;width:50.67px;height:16px;overflow:hidden"><div class="t" style="left:9px;top:4.0px;font-size:10.1px;color:#222">09 - 21 : Р</div></div></div>
<div class="a" style="left:267.625px;top:360px;width:1px;height:2px;background:#efefef"></div>
<div class="a" style="left:267.625px;top:378px;width:1px;height:24px;background:#efefef"></div>
<div class="a" style="left:268.62px;top:362px;width:55.38px;height:16px;background:#c3f8c3"><div class="a" style="left:0;top:0;width:50.67px;height:16px;overflow:hidden"><div class="t" style="left:9px;top:4.0px;font-size:10.1px;color:#222">09 - 21 : Р</div></div></div>
<div class="a" style="left:324.5px;top:360px;width:1px;height:2px;background:#efefef"></div>
<div class="a" style="left:324.5px;top:378px;width:1px;height:24px;background:#efefef"></div>
<div class="a" style="left:325.50px;top:362px;width:55.38px;height:16px;background:#ffb3b3"><div class="a" style="left:0;top:0;width:50.67px;height:16px;overflow:hidden"><div class="t" style="left:9px;top:4.0px;font-size:10.1px;color:#222">В</div></div></div>
<div class="a" style="left:381.375px;top:360px;width:1px;height:2px;background:#efefef"></div>
<div class="a" style="left:381.375px;top:378px;width:1px;height:24px;background:#efefef"></div>
<div class="a" style="left:382.38px;top:362px;width:55.38px;height:16px;background:#ffb3b3"><div class="a" style="left:0;top:0;width:50.67px;height:16px;overflow:hidden"><div class="t" style="left:9px;top:4.0px;font-size:10.1px;color:#222">В</div></div></div>
<div class="a" style="left:438.25px;top:360px;width:1px;height:2px;background:#efefef"></div>
<div class="a" style="left:438.25px;top:378px;width:1px;height:24px;background:#efefef"></div>
<div class="a" style="left:439.25px;top:362px;width:55.38px;height:16px;background:#ffb3b3"><div class="a" style="left:0;top:0;width:50.67px;height:16px;overflow:hidden"><div class="t" style="left:9px;top:4.0px;font-size:10.1px;color:#222">В</div></div></div>
<div class="a" style="left:495.125px;top:360px;width:1px;height:2px;background:#efefef"></div>
<div class="a" style="left:495.125px;top:378px;width:1px;height:24px;background:#efefef"></div>
<div class="a" style="left:496.12px;top:362px;width:55.38px;height:16px;background:#ffb3b3"><div class="a" style="left:0;top:0;width:50.67px;height:16px;overflow:hidden"><div class="t" style="left:9px;top:4.0px;font-size:10.1px;color:#222">В</div></div></div>
<div class="a" style="left:552.0px;top:360px;width:1px;height:2px;background:#efefef"></div>
<div class="a" style="left:552.0px;top:378px;width:1px;height:24px;background:#efefef"></div>
<div class="a" style="left:553.00px;top:362px;width:55.38px;height:16px;background:#c3f8c3"><div class="a" style="left:0;top:0;width:50.67px;height:16px;overflow:hidden"><div class="t" style="left:9px;top:4.0px;font-size:10.1px;color:#222">09 - 21 : Р</div></div></div>
<div class="a" style="left:608.875px;top:360px;width:1px;height:2px;background:#efefef"></div>
<div class="a" style="left:608.875px;top:378px;width:1px;height:24px;background:#efefef"></div>
<div class="a" style="left:609.88px;top:362px;width:55.38px;height:16px;background:#c3f8c3"><div class="a" style="left:0;top:0;width:50.67px;height:16px;overflow:hidden"><div class="t" style="left:9px;top:4.0px;font-size:10.1px;color:#222">09 - 21 : Р</div></div></div>
<div class="a" style="left:665.75px;top:360px;width:1px;height:2px;background:#efefef"></div>
<div class="a" style="left:665.75px;top:378px;width:1px;height:24px;background:#efefef"></div>
<div class="a" style="left:666.75px;top:362px;width:55.38px;height:16px;background:#c3f8c3"><div class="a" style="left:0;top:0;width:50.67px;height:16px;overflow:hidden"><div class="t" style="left:9px;top:4.0px;font-size:10.1px;color:#222">09 - 21 : Р</div></div></div>
<div class="a" style="left:722.625px;top:360px;width:1px;height:2px;background:#efefef"></div>
<div class="a" style="left:722.625px;top:378px;width:1px;height:24px;background:#efefef"></div>
<div class="a" style="left:723.62px;top:362px;width:55.38px;height:16px;background:#c3f8c3"><div class="a" style="left:0;top:0;width:50.67px;height:16px;overflow:hidden"><div class="t" style="left:9px;top:4.0px;font-size:10.1px;color:#222">09 - 21 : Р</div></div></div>
<div class="a" style="left:779.5px;top:360px;width:1px;height:2px;background:#efefef"></div>
<div class="a" style="left:779.5px;top:378px;width:1px;height:24px;background:#efefef"></div>
<div class="a" style="left:780.50px;top:362px;width:55.38px;height:16px;background:#ffb3b3"><div class="a" style="left:0;top:0;width:50.67px;height:16px;overflow:hidden"><div class="t" style="left:9px;top:4.0px;font-size:10.1px;color:#222">В</div></div></div>
<div class="a" style="left:836.375px;top:360px;width:1px;height:2px;background:#efefef"></div>
<div class="a" style="left:836.375px;top:378px;width:1px;height:24px;background:#efefef"></div>
<div class="a" style="left:837.38px;top:362px;width:55.38px;height:16px;background:#ffb3b3"><div class="a" style="left:0;top:0;width:50.67px;height:16px;overflow:hidden"><div class="t" style="left:9px;top:4.0px;font-size:10.1px;color:#222">В</div></div></div>
<div class="a" style="left:893.25px;top:360px;width:1px;height:2px;background:#efefef"></div>
<div class="a" style="left:893.25px;top:378px;width:1px;height:24px;background:#efefef"></div>
<div class="a" style="left:894.25px;top:362px;width:55.38px;height:16px;background:#ffb3b3"><div class="a" style="left:0;top:0;width:50.67px;height:16px;overflow:hidden"><div class="t" style="left:9px;top:4.0px;font-size:10.1px;color:#222">В</div></div></div>
<div class="a" style="left:950.125px;top:360px;width:1px;height:2px;background:#efefef"></div>
<div class="a" style="left:950.125px;top:378px;width:1px;height:24px;background:#efefef"></div>
<div class="a" style="left:951.12px;top:362px;width:55.38px;height:16px;background:#ffb3b3"><div class="a" style="left:0;top:0;width:50.67px;height:16px;overflow:hidden"><div class="t" style="left:9px;top:4.0px;font-size:10.1px;color:#222">В</div></div></div>
<div class="t" style="left:24.5px;top:364.0px;font-size:10.1px;color:#1a1a1a">Степанов</div>
<div class="t" style="left:24.5px;top:377.3px;font-size:10.1px;color:#1a1a1a">Дмитрий</div>
<div class="t" style="left:24.5px;top:390.6px;font-size:10.1px;color:#1a1a1a">Владимирович</div>
<div class="a" style="left:21px;top:402px;width:986px;height:41px;background:#a9abaf"></div>
<div class="a" style="left:21px;top:402px;width:986px;height:1px;background:#c9cacc"></div>
<div class="a" style="left:97px;top:402px;width:1px;height:41px;background:#e4e4e4"></div>
<div class="a" style="left:97.50px;top:402.5px;width:56.38px;height:19px;background:#f4f4f4"></div>
<div class="a" style="left:98.00px;top:403.5px;width:55.38px;height:17px;background:#ffb3b3"><div class="a" style="left:0;top:0;width:50.67px;height:17px;overflow:hidden"><div class="t" style="left:9px;top:4.5px;font-size:10.1px;color:#222">В</div></div></div>
<div class="a" style="left:153.875px;top:402px;width:1px;height:41px;background:#eeeff0"></div>
<div class="a" style="left:154.38px;top:402.5px;width:56.38px;height:19px;background:#f4f4f4"></div>
<div class="a" style="left:154.88px;top:403.5px;width:55.38px;height:17px;background:#ffb3b3"><div class="a" style="left:0;top:0;width:50.67px;height:17px;overflow:hidden"><div class="t" style="left:9px;top:4.5px;font-size:10.1px;color:#222">В</div></div></div>
<div class="a" style="left:210.75px;top:402px;width:1px;height:41px;background:#eeeff0"></div>
<div class="a" style="left:211.25px;top:402.5px;width:56.38px;height:19px;background:#f4f4f4"></div>
<div class="a" style="left:211.75px;top:403.5px;width:55.38px;height:17px;background:#ffb3b3"><div class="a" style="left:0;top:0;width:50.67px;height:17px;overflow:hidden"><div class="t" style="left:9px;top:4.5px;font-size:10.1px;color:#222">В</div></div></div>
<div class="a" style="left:267.625px;top:402px;width:1px;height:41px;background:#eeeff0"></div>
<div class="a" style="left:268.12px;top:402.5px;width:56.38px;height:19px;background:#f4f4f4"></div>
<div class="a" style="left:268.62px;top:403.5px;width:55.38px;height:17px;background:#ffb3b3"><div class="a" style="left:0;top:0;width:50.67px;height:17px;overflow:hidden"><div class="t" style="left:9px;top:4.5px;font-size:10.1px;color:#222">В</div></div></div>
<div class="a" style="left:324.5px;top:402px;width:1px;height:41px;background:#eeeff0"></div>
<div class="a" style="left:325.00px;top:402.5px;width:56.38px;height:19px;background:#f4f4f4"></div>
<div class="a" style="left:325.50px;top:403.5px;width:55.38px;height:17px;background:#c3f8c3"><div class="a" style="left:0;top:0;width:50.67px;height:17px;overflow:hidden"><div class="t" style="left:9px;top:4.5px;font-size:10.1px;color:#222">09 - 21 : Р</div></div></div>
<div class="a" style="left:381.375px;top:402px;width:1px;height:41px;background:#eeeff0"></div>
<div class="a" style="left:381.88px;top:402.5px;width:56.38px;height:19px;background:#f4f4f4"></div>
<div class="a" style="left:382.38px;top:403.5px;width:55.38px;height:17px;background:#c3f8c3"><div class="a" style="left:0;top:0;width:50.67px;height:17px;overflow:hidden"><div class="t" style="left:9px;top:4.5px;font-size:10.1px;color:#222">09 - 21 : Р</div></div></div>
<div class="a" style="left:438.25px;top:402px;width:1px;height:41px;background:#eeeff0"></div>
<div class="a" style="left:438.75px;top:402.5px;width:56.38px;height:19px;background:#f4f4f4"></div>
<div class="a" style="left:439.25px;top:403.5px;width:55.38px;height:17px;background:#c3f8c3"><div class="a" style="left:0;top:0;width:50.67px;height:17px;overflow:hidden"><div class="t" style="left:9px;top:4.5px;font-size:10.1px;color:#222">09 - 21 : Р</div></div></div>
<div class="a" style="left:495.125px;top:402px;width:1px;height:41px;background:#eeeff0"></div>
<div class="a" style="left:495.62px;top:402.5px;width:56.38px;height:19px;background:#f4f4f4"></div>
<div class="a" style="left:496.12px;top:403.5px;width:55.38px;height:17px;background:#c3f8c3"><div class="a" style="left:0;top:0;width:50.67px;height:17px;overflow:hidden"><div class="t" style="left:9px;top:4.5px;font-size:10.1px;color:#222">09 - 21 : Р</div></div></div>
<div class="a" style="left:552.0px;top:402px;width:1px;height:41px;background:#eeeff0"></div>
<div class="a" style="left:552.50px;top:402.5px;width:56.38px;height:19px;background:#f4f4f4"></div>
<div class="a" style="left:553.00px;top:403.5px;width:55.38px;height:17px;background:#ffb3b3"><div class="a" style="left:0;top:0;width:50.67px;height:17px;overflow:hidden"><div class="t" style="left:9px;top:4.5px;font-size:10.1px;color:#222">В</div></div></div>
<div class="a" style="left:608.875px;top:402px;width:1px;height:41px;background:#eeeff0"></div>
<div class="a" style="left:609.38px;top:402.5px;width:56.38px;height:19px;background:#f4f4f4"></div>
<div class="a" style="left:609.88px;top:403.5px;width:55.38px;height:17px;background:#ffb3b3"><div class="a" style="left:0;top:0;width:50.67px;height:17px;overflow:hidden"><div class="t" style="left:9px;top:4.5px;font-size:10.1px;color:#222">В</div></div></div>
<div class="a" style="left:665.75px;top:402px;width:1px;height:41px;background:#eeeff0"></div>
<div class="a" style="left:666.25px;top:402.5px;width:56.38px;height:19px;background:#f4f4f4"></div>
<div class="a" style="left:666.75px;top:403.5px;width:55.38px;height:17px;background:#ffb3b3"><div class="a" style="left:0;top:0;width:50.67px;height:17px;overflow:hidden"><div class="t" style="left:9px;top:4.5px;font-size:10.1px;color:#222">В</div></div></div>
<div class="a" style="left:722.625px;top:402px;width:1px;height:41px;background:#eeeff0"></div>
<div class="a" style="left:723.12px;top:402.5px;width:56.38px;height:19px;background:#f4f4f4"></div>
<div class="a" style="left:723.62px;top:403.5px;width:55.38px;height:17px;background:#ffb3b3"><div class="a" style="left:0;top:0;width:50.67px;height:17px;overflow:hidden"><div class="t" style="left:9px;top:4.5px;font-size:10.1px;color:#222">В</div></div></div>
<div class="a" style="left:779.5px;top:402px;width:1px;height:41px;background:#eeeff0"></div>
<div class="a" style="left:780.00px;top:402.5px;width:56.38px;height:19px;background:#f4f4f4"></div>
<div class="a" style="left:780.50px;top:403.5px;width:55.38px;height:17px;background:#c3f8c3"><div class="a" style="left:0;top:0;width:50.67px;height:17px;overflow:hidden"><div class="t" style="left:9px;top:4.5px;font-size:10.1px;color:#222">09 - 21 : Р</div></div></div>
<div class="a" style="left:836.375px;top:402px;width:1px;height:41px;background:#eeeff0"></div>
<div class="a" style="left:836.88px;top:402.5px;width:56.38px;height:19px;background:#f4f4f4"></div>
<div class="a" style="left:837.38px;top:403.5px;width:55.38px;height:17px;background:#c3f8c3"><div class="a" style="left:0;top:0;width:50.67px;height:17px;overflow:hidden"><div class="t" style="left:9px;top:4.5px;font-size:10.1px;color:#222">09 - 21 : Р</div></div></div>
<div class="a" style="left:893.25px;top:402px;width:1px;height:41px;background:#eeeff0"></div>
<div class="a" style="left:893.75px;top:402.5px;width:56.38px;height:19px;background:#f4f4f4"></div>
<div class="a" style="left:894.25px;top:403.5px;width:55.38px;height:17px;background:#c3f8c3"><div class="a" style="left:0;top:0;width:50.67px;height:17px;overflow:hidden"><div class="t" style="left:9px;top:4.5px;font-size:10.1px;color:#222">09 - 21 : Р</div></div></div>
<div class="a" style="left:950.125px;top:402px;width:1px;height:41px;background:#eeeff0"></div>
<div class="a" style="left:950.62px;top:402.5px;width:56.38px;height:19px;background:#f4f4f4"></div>
<div class="a" style="left:951.12px;top:403.5px;width:55.38px;height:17px;background:#c3f8c3"><div class="a" style="left:0;top:0;width:50.67px;height:17px;overflow:hidden"><div class="t" style="left:9px;top:4.5px;font-size:10.1px;color:#222">09 - 21 : Р</div></div></div>
<div class="t" style="left:24.5px;top:405.0px;font-size:10.1px;color:#1a1a1a">Пышминцев</div>
<div class="t" style="left:24.5px;top:418.3px;font-size:10.1px;color:#1a1a1a">Виктор</div>
<div class="t" style="left:24.5px;top:431.6px;font-size:10.1px;color:#1a1a1a">Андреевич</div>
<div class="a" style="left:21px;top:443px;width:986px;height:42px;background:#a9abaf"></div>
<div class="a" style="left:21px;top:443px;width:986px;height:1px;background:#c9cacc"></div>
<div class="a" style="left:97px;top:443px;width:1px;height:42px;background:#e4e4e4"></div>
<div class="a" style="left:97.50px;top:444px;width:56.38px;height:19.5px;background:#f4f4f4"></div>
<div class="a" style="left:98.00px;top:445px;width:55.38px;height:17.5px;background:#ffb3b3"><div class="a" style="left:0;top:0;width:50.67px;height:17.5px;overflow:hidden"><div class="t" style="left:9px;top:4.5px;font-size:10.1px;color:#222">В</div></div></div>
<div class="a" style="left:153.875px;top:443px;width:1px;height:42px;background:#eeeff0"></div>
<div class="a" style="left:154.38px;top:444px;width:56.38px;height:19.5px;background:#f4f4f4"></div>
<div class="a" style="left:154.88px;top:445px;width:55.38px;height:17.5px;background:#ffb3b3"><div class="a" style="left:0;top:0;width:50.67px;height:17.5px;overflow:hidden"><div class="t" style="left:9px;top:4.5px;font-size:10.1px;color:#222">В</div></div></div>
<div class="a" style="left:210.75px;top:443px;width:1px;height:42px;background:#eeeff0"></div>
<div class="a" style="left:211.25px;top:444px;width:56.38px;height:19.5px;background:#f4f4f4"></div>
<div class="a" style="left:211.75px;top:445px;width:55.38px;height:17.5px;background:#ffb3b3"><div class="a" style="left:0;top:0;width:50.67px;height:17.5px;overflow:hidden"><div class="t" style="left:9px;top:4.5px;font-size:10.1px;color:#222">В</div></div></div>
<div class="a" style="left:267.625px;top:443px;width:1px;height:42px;background:#eeeff0"></div>
<div class="a" style="left:268.12px;top:444px;width:56.38px;height:19.5px;background:#f4f4f4"></div>
<div class="a" style="left:268.62px;top:445px;width:55.38px;height:17.5px;background:#ffb3b3"><div class="a" style="left:0;top:0;width:50.67px;height:17.5px;overflow:hidden"><div class="t" style="left:9px;top:4.5px;font-size:10.1px;color:#222">В</div></div></div>
<div class="a" style="left:324.5px;top:443px;width:1px;height:42px;background:#eeeff0"></div>
<div class="a" style="left:325.00px;top:444px;width:56.38px;height:19.5px;background:#f4f4f4"></div>
<div class="a" style="left:325.50px;top:445px;width:55.38px;height:17.5px;background:#c3f8c3"><div class="a" style="left:0;top:0;width:50.67px;height:17.5px;overflow:hidden"><div class="t" style="left:9px;top:4.5px;font-size:10.1px;color:#222">09 - 21 : Р</div></div></div>
<div class="a" style="left:381.375px;top:443px;width:1px;height:42px;background:#eeeff0"></div>
<div class="a" style="left:381.88px;top:444px;width:56.38px;height:19.5px;background:#f4f4f4"></div>
<div class="a" style="left:382.38px;top:445px;width:55.38px;height:17.5px;background:#c3f8c3"><div class="a" style="left:0;top:0;width:50.67px;height:17.5px;overflow:hidden"><div class="t" style="left:9px;top:4.5px;font-size:10.1px;color:#222">09 - 21 : Р</div></div></div>
<div class="a" style="left:438.25px;top:443px;width:1px;height:42px;background:#eeeff0"></div>
<div class="a" style="left:438.75px;top:444px;width:56.38px;height:19.5px;background:#f4f4f4"></div>
<div class="a" style="left:439.25px;top:445px;width:55.38px;height:17.5px;background:#c3f8c3"><div class="a" style="left:0;top:0;width:50.67px;height:17.5px;overflow:hidden"><div class="t" style="left:9px;top:4.5px;font-size:10.1px;color:#222">09 - 21 : Р</div></div></div>
<div class="a" style="left:495.125px;top:443px;width:1px;height:42px;background:#eeeff0"></div>
<div class="a" style="left:495.62px;top:444px;width:56.38px;height:19.5px;background:#f4f4f4"></div>
<div class="a" style="left:496.12px;top:445px;width:55.38px;height:17.5px;background:#c3f8c3"><div class="a" style="left:0;top:0;width:50.67px;height:17.5px;overflow:hidden"><div class="t" style="left:9px;top:4.5px;font-size:10.1px;color:#222">09 - 21 : Р</div></div></div>
<div class="a" style="left:552.0px;top:443px;width:1px;height:42px;background:#eeeff0"></div>
<div class="a" style="left:552.50px;top:444px;width:56.38px;height:19.5px;background:#f4f4f4"></div>
<div class="a" style="left:553.00px;top:445px;width:55.38px;height:17.5px;background:#ffb3b3"><div class="a" style="left:0;top:0;width:50.67px;height:17.5px;overflow:hidden"><div class="t" style="left:9px;top:4.5px;font-size:10.1px;color:#222">В</div></div></div>
<div class="a" style="left:608.875px;top:443px;width:1px;height:42px;background:#eeeff0"></div>
<div class="a" style="left:609.38px;top:444px;width:56.38px;height:19.5px;background:#f4f4f4"></div>
<div class="a" style="left:609.88px;top:445px;width:55.38px;height:17.5px;background:#ffb3b3"><div class="a" style="left:0;top:0;width:50.67px;height:17.5px;overflow:hidden"><div class="t" style="left:9px;top:4.5px;font-size:10.1px;color:#222">В</div></div></div>
<div class="a" style="left:665.75px;top:443px;width:1px;height:42px;background:#eeeff0"></div>
<div class="a" style="left:666.25px;top:444px;width:56.38px;height:19.5px;background:#f4f4f4"></div>
<div class="a" style="left:666.75px;top:445px;width:55.38px;height:17.5px;background:#ffb3b3"><div class="a" style="left:0;top:0;width:50.67px;height:17.5px;overflow:hidden"><div class="t" style="left:9px;top:4.5px;font-size:10.1px;color:#222">В</div></div></div>
<div class="a" style="left:722.625px;top:443px;width:1px;height:42px;background:#eeeff0"></div>
<div class="a" style="left:723.12px;top:444px;width:56.38px;height:19.5px;background:#f4f4f4"></div>
<div class="a" style="left:723.62px;top:445px;width:55.38px;height:17.5px;background:#ffb3b3"><div class="a" style="left:0;top:0;width:50.67px;height:17.5px;overflow:hidden"><div class="t" style="left:9px;top:4.5px;font-size:10.1px;color:#222">В</div></div></div>
<div class="a" style="left:779.5px;top:443px;width:1px;height:42px;background:#eeeff0"></div>
<div class="a" style="left:780.00px;top:444px;width:56.38px;height:19.5px;background:#f4f4f4"></div>
<div class="a" style="left:780.50px;top:445px;width:55.38px;height:17.5px;background:#c3f8c3"><div class="a" style="left:0;top:0;width:50.67px;height:17.5px;overflow:hidden"><div class="t" style="left:9px;top:4.5px;font-size:10.1px;color:#222">09 - 21 : Р</div></div></div>
<div class="a" style="left:836.375px;top:443px;width:1px;height:42px;background:#eeeff0"></div>
<div class="a" style="left:836.88px;top:444px;width:56.38px;height:19.5px;background:#f4f4f4"></div>
<div class="a" style="left:837.38px;top:445px;width:55.38px;height:17.5px;background:#c3f8c3"><div class="a" style="left:0;top:0;width:50.67px;height:17.5px;overflow:hidden"><div class="t" style="left:9px;top:4.5px;font-size:10.1px;color:#222">09 - 21 : Р</div></div></div>
<div class="a" style="left:893.25px;top:443px;width:1px;height:42px;background:#eeeff0"></div>
<div class="a" style="left:893.75px;top:444px;width:56.38px;height:19.5px;background:#f4f4f4"></div>
<div class="a" style="left:894.25px;top:445px;width:55.38px;height:17.5px;background:#c3f8c3"><div class="a" style="left:0;top:0;width:50.67px;height:17.5px;overflow:hidden"><div class="t" style="left:9px;top:4.5px;font-size:10.1px;color:#222">09 - 21 : Р</div></div></div>
<div class="a" style="left:950.125px;top:443px;width:1px;height:42px;background:#eeeff0"></div>
<div class="a" style="left:950.62px;top:444px;width:56.38px;height:19.5px;background:#f4f4f4"></div>
<div class="a" style="left:951.12px;top:445px;width:55.38px;height:17.5px;background:#c3f8c3"><div class="a" style="left:0;top:0;width:50.67px;height:17.5px;overflow:hidden"><div class="t" style="left:9px;top:4.5px;font-size:10.1px;color:#222">09 - 21 : Р</div></div></div>
<div class="t" style="left:24.5px;top:447.5px;font-size:10.1px;color:#1a1a1a">Перьков</div>
<div class="t" style="left:24.5px;top:460.8px;font-size:10.1px;color:#1a1a1a">Роман</div>
<div class="t" style="left:24.5px;top:474.1px;font-size:10.1px;color:#1a1a1a">Викторович</div>
<div class="a" style="left:21px;top:485px;width:986px;height:21px;background:#fff;overflow:hidden">
<div class="t" style="left:6px;top:2.5px;font-size:10px;color:#a8a8a8">Ресурс</div>
</div>
<div class="a" style="left:21px;top:484.6px;width:986px;height:1px;background:#dcdcde"></div>
<div class="a" style="left:21px;top:498.5px;width:986px;height:1px;background:#ededed"></div>
<div class="a" style="left:97px;top:485px;width:1px;height:21px;background:#e8e8e8"></div>
<div class="t" style="left:100.00px;top:487.5px;font-size:10px;color:#a8a8a8">Вт (17)</div>
<div class="a" style="left:98.00px;top:502px;width:63.50px;height:3px;background:#c3f8c3"></div>
<div class="a" style="left:162.0px;top:485px;width:1px;height:21px;background:#ececec"></div>
<div class="t" style="left:165.00px;top:487.5px;font-size:10px;color:#a8a8a8">Ср (18)</div>
<div class="a" style="left:163.00px;top:502px;width:63.50px;height:3px;background:#c3f8c3"></div>
<div class="a" style="left:227.0px;top:485px;width:1px;height:21px;background:#ececec"></div>
<div class="t" style="left:230.00px;top:487.5px;font-size:10px;color:#a8a8a8">Чт (19)</div>
<div class="a" style="left:228.00px;top:502px;width:63.50px;height:3px;background:#c3f8c3"></div>
<div class="a" style="left:292.0px;top:485px;width:1px;height:21px;background:#ececec"></div>
<div class="t" style="left:295.00px;top:487.5px;font-size:10px;color:#a8a8a8">Пт (20)</div>
<div class="a" style="left:293.00px;top:502px;width:63.50px;height:3px;background:#c3f8c3"></div>
<div class="a" style="left:357.0px;top:485px;width:1px;height:21px;background:#ececec"></div>
<div class="t" style="left:360.00px;top:487.5px;font-size:10px;color:#a8a8a8">Сб (21)</div>
<div class="a" style="left:358.00px;top:502px;width:63.50px;height:3px;background:#ffb3b3"></div>
<div class="a" style="left:422.0px;top:485px;width:1px;height:21px;background:#ececec"></div>
<div class="t" style="left:425.00px;top:487.5px;font-size:10px;color:#a8a8a8">Вс (22)</div>
<div class="a" style="left:423.00px;top:502px;width:63.50px;height:3px;background:#ffb3b3"></div>
<div class="a" style="left:487.0px;top:485px;width:1px;height:21px;background:#ececec"></div>
<div class="t" style="left:490.00px;top:487.5px;font-size:10px;color:#a8a8a8">Пн (23)</div>
<div class="a" style="left:488.00px;top:502px;width:63.50px;height:3px;background:#ffb3b3"></div>
<div class="a" style="left:552.0px;top:485px;width:1px;height:21px;background:#ececec"></div>
<div class="t" style="left:555.00px;top:487.5px;font-size:10px;color:#a8a8a8">Вт (24)</div>
<div class="a" style="left:553.00px;top:502px;width:63.50px;height:3px;background:#ffb3b3"></div>
<div class="a" style="left:617.0px;top:485px;width:1px;height:21px;background:#ececec"></div>
<div class="t" style="left:620.00px;top:487.5px;font-size:10px;color:#a8a8a8">Ср (25)</div>
<div class="a" style="left:618.00px;top:502px;width:63.50px;height:3px;background:#c3f8c3"></div>
<div class="a" style="left:682.0px;top:485px;width:1px;height:21px;background:#ececec"></div>
<div class="t" style="left:685.00px;top:487.5px;font-size:10px;color:#a8a8a8">Чт (26)</div>
<div class="a" style="left:683.00px;top:502px;width:63.50px;height:3px;background:#c3f8c3"></div>
<div class="a" style="left:747.0px;top:485px;width:1px;height:21px;background:#ececec"></div>
<div class="t" style="left:750.00px;top:487.5px;font-size:10px;color:#a8a8a8">Пт (27)</div>
<div class="a" style="left:748.00px;top:502px;width:63.50px;height:3px;background:#c3f8c3"></div>
<div class="a" style="left:812.0px;top:485px;width:1px;height:21px;background:#ececec"></div>
<div class="t" style="left:815.00px;top:487.5px;font-size:10px;color:#a8a8a8">Сб (28)</div>
<div class="a" style="left:813.00px;top:502px;width:63.50px;height:3px;background:#c3f8c3"></div>
<div class="a" style="left:877.0px;top:485px;width:1px;height:21px;background:#ececec"></div>
<div class="t" style="left:880.00px;top:487.5px;font-size:10px;color:#a8a8a8">Вс (29)</div>
<div class="a" style="left:878.00px;top:502px;width:63.50px;height:3px;background:#ffb3b3"></div>
<div class="a" style="left:942.0px;top:485px;width:1px;height:21px;background:#ececec"></div>
<div class="t" style="left:945.00px;top:487.5px;font-size:10px;color:#a8a8a8">Пн (30)</div>
<div class="a" style="left:943.00px;top:502px;width:63.50px;height:3px;background:#ffb3b3"></div>
<div class="a" style="left:23px;top:504px;width:8px;height:2px;background:#555;border-radius:1px 1px 0 0"></div>
<div class="a" style="left:1007px;top:304px;width:9px;height:202px;background:#fff"></div>
<svg class="a" style="left:1008px;top:306px" width="7" height="5" viewBox="0 0 7 5"><path d="M0.5 4.5 L3.5 0.8 L6.5 4.5 Z" fill="#c4c4c4"/></svg>
<div class="a" style="left:1009px;top:316px;width:5px;height:96px;background:#8c8c8c;border-radius:3px"></div>
<div class="a" style="left:1009px;top:412px;width:5px;height:79px;background:#d6d6d6;border-radius:0 0 3px 3px"></div>
<svg class="a" style="left:1008px;top:496px" width="7" height="5" viewBox="0 0 7 5"><path d="M0.5 0.5 L3.5 4.2 L6.5 0.5 Z" fill="#c4c4c4"/></svg>
<div class="a" style="left:1021px;top:0;width:3px;height:518px;background:#000"></div>
<div class="a" style="left:14px;top:388px;width:1010px;height:125px;border:4.5px solid #e31b1b"></div>
</body></html>
